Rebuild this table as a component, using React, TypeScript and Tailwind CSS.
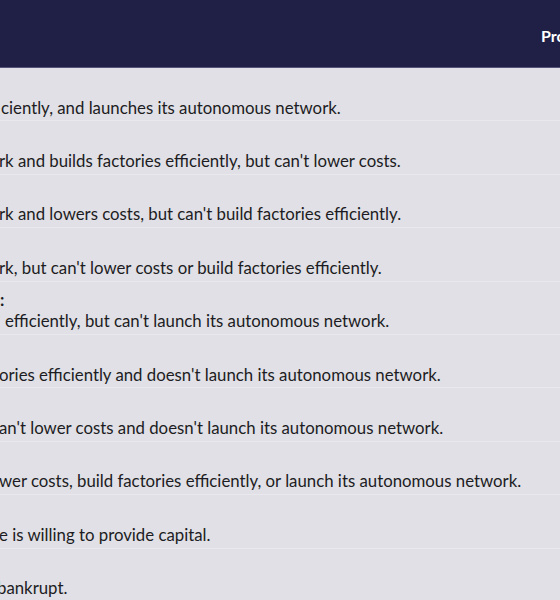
import React from 'react';

interface Row {
  title: string;
  text: string;
  indent: number;
}

const rows: Row[] = [
  { title: '', text: 'ciently, and launches its autonomous network.', indent: 1 },
  { title: '', text: "rk and builds factories efficiently, but can't lower costs.", indent: -1 },
  { title: '', text: "rk and lowers costs, but can't build factories efficiently.", indent: -1 },
  { title: '', text: "rk, but can't lower costs or build factories efficiently.", indent: -1 },
  { title: ':', text: "efficiently, but can't launch its autonomous network.", indent: 5 },
  { title: '', text: "ories efficiently and doesn't launch its autonomous network.", indent: -1 },
  { title: '', text: "an't lower costs and doesn't launch its autonomous network.", indent: -1 },
  { title: '', text: "wer costs, build factories efficiently, or launch its autonomous network.", indent: -1 },
  { title: '', text: 'e is willing to provide capital.', indent: -1 },
  { title: '', text: 'bankrupt.', indent: -3 },
];

export default function App() {
  return (
    <div
      className="w-[560px] h-[600px] overflow-hidden bg-[#e0e0e6] text-[#1c1c22]"
      style={{ fontFamily: 'Lato, "Open Sans", sans-serif' }}
    >
      {/* Header */}
      <div className="h-[68px] bg-[#201f45] border-b border-[#55557a] flex items-center overflow-hidden pl-[541px]">
        <span className="text-white font-bold text-[16px] whitespace-nowrap pt-[5px]">Probability</span>
      </div>

      {/* Rows */}
      <div className="flex flex-col">
        {rows.map((row, i) => (
          <div key={i} className="h-[53.4px] border-b border-[#e9e9ed] flex flex-col justify-center pt-[6px]">
            <div className="h-[20px] leading-[20px] font-bold text-[17px] whitespace-nowrap">
              {row.title}
            </div>
            <div
              className="h-[21px] leading-[21px] text-[16.8px] whitespace-nowrap"
              style={{ marginLeft: row.indent }}
            >
              {row.text}
            </div>
          </div>
        ))}
      </div>
    </div>
  );
}
